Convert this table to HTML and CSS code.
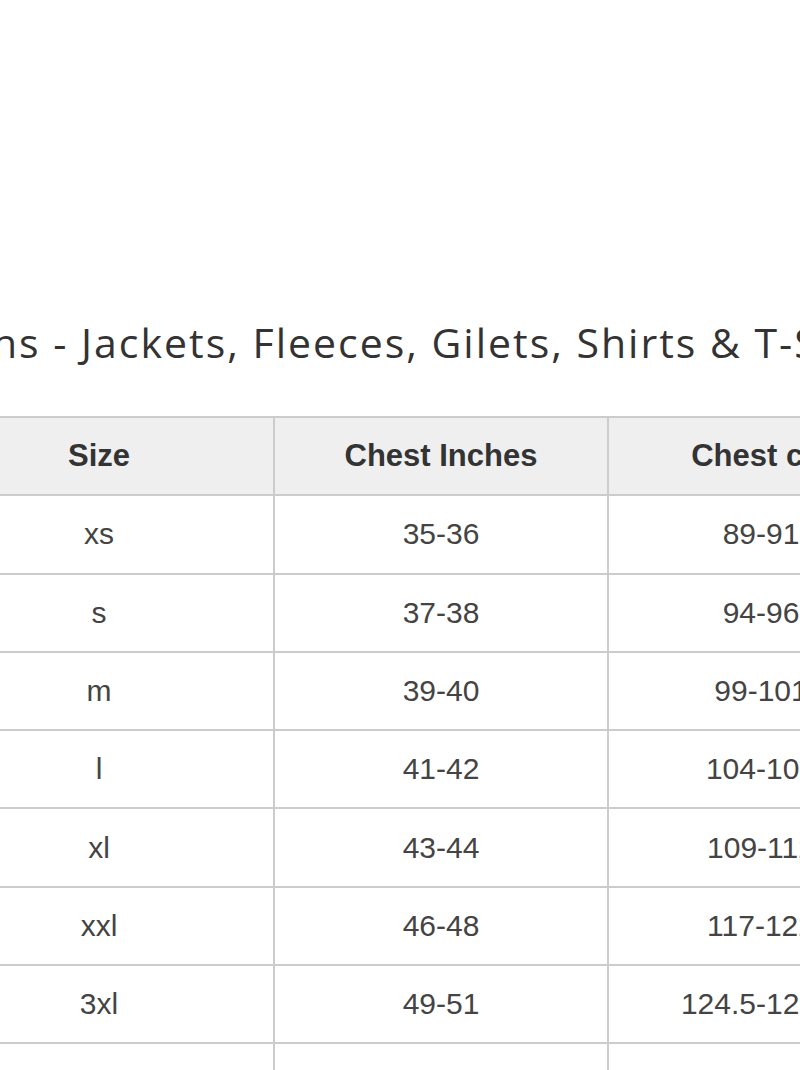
FILE: index.html
```html
<!DOCTYPE html>
<html lang="en">
<head>
<meta charset="utf-8">
<title>Size Guide</title>
<link rel="stylesheet" href="styles.css">
</head>
<body>
<div class="page">
  <div class="guide">
    <h2 class="guide-title">Mens - Jackets, Fleeces, Gilets, Shirts &amp; T-Shirts</h2>
    <table class="size-table">
      <colgroup>
        <col class="c1"><col class="c2"><col class="c3">
      </colgroup>
      <thead>
        <tr><th>Size</th><th>Chest Inches</th><th>Chest cm</th></tr>
      </thead>
      <tbody>
        <tr><td>xs</td><td>35-36</td><td>89-91</td></tr>
        <tr><td>s</td><td>37-38</td><td>94-96</td></tr>
        <tr><td>m</td><td>39-40</td><td>99-101</td></tr>
        <tr><td>l</td><td>41-42</td><td>104-106</td></tr>
        <tr><td>xl</td><td>43-44</td><td>109-112</td></tr>
        <tr><td>xxl</td><td>46-48</td><td>117-122</td></tr>
        <tr><td>3xl</td><td>49-51</td><td>124.5-129.5</td></tr>
        <tr><td>4xl</td><td>52-54</td><td>132-137</td></tr>
      </tbody>
    </table>
  </div>
</div>
</body>
</html>
```
FILE: styles.css
```css
html, body {
  margin: 0;
  padding: 0;
  background: #ffffff;
}
body {
  width: 800px;
  height: 1070px;
  overflow: hidden;
}
.page {
  padding-top: 318px;
}
.guide {
  width: 990px;
  margin-left: -77px;
}
.guide-title {
  margin: 0 0 50px 0;
  font-family: "Open Sans", "Noto Sans", sans-serif;
  font-weight: 400;
  font-size: 41px;
  line-height: 48px;
  letter-spacing: 2px;
  color: #333333;
  text-align: left;
  text-indent: 5px;
  white-space: nowrap;
}
.size-table {
  border-collapse: collapse;
  table-layout: fixed;
  width: 990px;
  font-family: "Liberation Sans", Arial, sans-serif;
  font-size: 30px;
}
.c1 { width: 350px; }
.c2 { width: 334px; }
.c3 { width: 306px; }
.size-table th,
.size-table td {
  border: 2px solid #cccccc;
  text-align: center;
  padding: 0;
  height: 76.3px;
}
.size-table th {
  background: #efefef;
  color: #333333;
  font-weight: 700;
  font-size: 31px;
}
.size-table td {
  color: #444444;
  background: #ffffff;
}
```
